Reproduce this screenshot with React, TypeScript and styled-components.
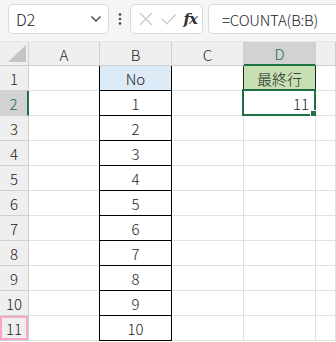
import React from 'react'
import styled, { createGlobalStyle } from 'styled-components'

const GlobalStyle = createGlobalStyle`
  html, body {
    margin: 0;
    padding: 0;
    background: #ffffff;
  }
  body {
    font-family: 'Noto Sans CJK JP', 'Noto Sans', sans-serif;
    font-weight: 300;
  }
`

const green = '#1e7145'
const gridLine = '#e1e1e1'
const headLine = '#d0d0d0'

const Toolbar = styled.div`
  height: 42px;
  display: flex;
  align-items: flex-start;
  padding: 4px 0 0 8px;
  box-sizing: border-box;
  background: #f5f5f5;
  border-bottom: 1px solid #e6e6e6;
`

const Box = styled.div<{ w?: number }>`
  height: 30px;
  box-sizing: border-box;
  background: #ffffff;
  border: 1px solid #d9d9d9;
  border-radius: 5px;
  display: flex;
  align-items: center;
  ${(p) => (p.w ? `width: ${p.w}px;` : 'flex: 1;')}
`

const NameBox = styled(Box)`
  justify-content: space-between;
  padding: 0 6px 0 7px;
  font-size: 16px;
  color: #222;
`

const Dots = styled.div`
  width: 21px;
  height: 30px;
  display: flex;
  align-items: center;
  justify-content: center;
`

const FxBox = styled(Box)`
  padding: 0 5px 0 7px;
  gap: 6px;
  margin-right: 5px;
`

const FxLabel = styled.span`
  font-family: 'DejaVu Serif', 'Liberation Serif', serif;
  font-style: italic;
  font-weight: bold;
  font-size: 15px;
  color: #333;
  margin-left: auto;
  letter-spacing: -1px;
`

const FormulaBox = styled(Box)`
  border-right: none;
  border-radius: 5px 0 0 5px;
  padding-left: 13px;
  font-size: 15px;
  letter-spacing: -0.2px;
  color: #222;
  white-space: nowrap;
`

const Sheet = styled.div`
  display: grid;
  grid-template-columns: 29px 71px 72px 72px 72px 1fr;
  grid-template-rows: 24px;
  grid-auto-rows: 25px;
`

const HeadCell = styled.div<{ active?: boolean }>`
  box-sizing: border-box;
  background: ${(p) => (p.active ? '#d2d2d2' : '#efefef')};
  color: ${(p) => (p.active ? green : '#222')};
  border-right: 1px solid ${headLine};
  border-bottom: ${(p) => (p.active ? `2px solid ${green}` : `1px solid ${headLine}`)};
  display: flex;
  align-items: center;
  justify-content: center;
  font-size: 15px;
  padding-top: 1px;
`

const Corner = styled(HeadCell)`
  align-items: flex-end;
  justify-content: flex-end;
  padding: 0 2px 3px 0;
`

const RowHead = styled.div<{ active?: boolean; marked?: boolean }>`
  box-sizing: border-box;
  background: ${(p) => (p.active ? '#d2d2d2' : '#efefef')};
  color: ${(p) => (p.active ? green : '#222')};
  border-right: ${(p) => (p.active ? `2px solid ${green}` : `1px solid ${headLine}`)};
  border-bottom: 1px solid ${headLine};
  display: flex;
  align-items: center;
  justify-content: center;
  font-size: 15px;
  position: relative;
  ${(p) =>
    p.marked &&
    `
    &::after {
      content: '';
      position: absolute;
      inset: 0 0 0 0;
      border: 2px solid #f7a8c8;
    }
  `}
`

const Cell = styled.div<{ bg?: string; boxed?: boolean; align?: string; sideDark?: boolean }>`
  box-sizing: border-box;
  background: ${(p) => p.bg || '#ffffff'};
  border-right: 1px solid ${(p) => (p.boxed || p.sideDark ? '#222' : gridLine)};
  border-bottom: 1px solid ${(p) => (p.boxed ? '#000' : gridLine)};
  display: flex;
  align-items: center;
  justify-content: ${(p) => p.align || 'center'};
  font-size: 15px;
  color: #222;
  padding: 0 6px;
  position: relative;
`

const BCell = styled(Cell)`
  margin-left: -1px;
  border-left: 1px solid #000;
  border-right-color: #000;
`

const Selected = styled.div`
  position: absolute;
  left: -2px;
  top: -2px;
  right: -1px;
  bottom: -1px;
  border: 2px solid ${green};
  pointer-events: none;
`

const Handle = styled.div`
  position: absolute;
  right: -5px;
  bottom: -5px;
  width: 7px;
  height: 7px;
  background: ${green};
  border: 1px solid #fff;
`

const Chevron = () => (
  <svg width="12" height="8" viewBox="0 0 12 8">
    <path d="M1.5 1.5 L6 6 L10.5 1.5" fill="none" stroke="#444" strokeWidth="1.4" />
  </svg>
)

const VDots = () => (
  <svg width="4" height="14" viewBox="0 0 4 14">
    <circle cx="2" cy="2.5" r="1.3" fill="#444" />
    <circle cx="2" cy="7" r="1.3" fill="#444" />
    <circle cx="2" cy="11.5" r="1.3" fill="#444" />
  </svg>
)

const Cross = () => (
  <svg width="16" height="16" viewBox="0 0 16 16">
    <path d="M2 2 L14 14 M14 2 L2 14" stroke="#c8c8c8" strokeWidth="1.3" />
  </svg>
)

const Check = () => (
  <svg width="18" height="16" viewBox="0 0 18 16">
    <path d="M2 8 L7 13 L16 3" fill="none" stroke="#c8c8c8" strokeWidth="1.3" />
  </svg>
)

const CornerMark = () => (
  <svg width="18" height="17" viewBox="0 0 18 17">
    <polygon points="18,0 18,17 0,17" fill="#c4c4c4" />
  </svg>
)

const columns = ['A', 'B', 'C', 'D', '']

export default function App() {
  const rows = Array.from({ length: 11 }, (_, i) => i + 1)
  return (
    <>
      <GlobalStyle />
      <Toolbar>
        <NameBox w={101}>
          <span>D2</span>
          <Chevron />
        </NameBox>
        <Dots>
          <VDots />
        </Dots>
        <FxBox w={73}>
          <Cross />
          <Check />
          <FxLabel>fx</FxLabel>
        </FxBox>
        <FormulaBox>=COUNTA(B:B)</FormulaBox>
      </Toolbar>
      <Sheet>
        <Corner>
          <CornerMark />
        </Corner>
        {columns.map((c) => (
          <HeadCell key={c || 'e'} active={c === 'D'}>
            {c}
          </HeadCell>
        ))}
        {rows.map((r) => (
          <React.Fragment key={r}>
            <RowHead active={r === 2} marked={r === 11}>
              {r}
            </RowHead>
            <Cell />
            <BCell boxed bg={r === 1 ? '#ddebf7' : undefined}>
              {r === 1 ? 'No' : r - 1}
            </BCell>
            <Cell sideDark={r === 1} />
            {r === 1 ? (
              <Cell bg="#c6e0b4" sideDark>
                最終行
              </Cell>
            ) : r === 2 ? (
              <Cell align="flex-end">
                11
                <Selected>
                  <Handle />
                </Selected>
              </Cell>
            ) : (
              <Cell />
            )}
            <Cell />
          </React.Fragment>
        ))}
      </Sheet>
    </>
  )
}
